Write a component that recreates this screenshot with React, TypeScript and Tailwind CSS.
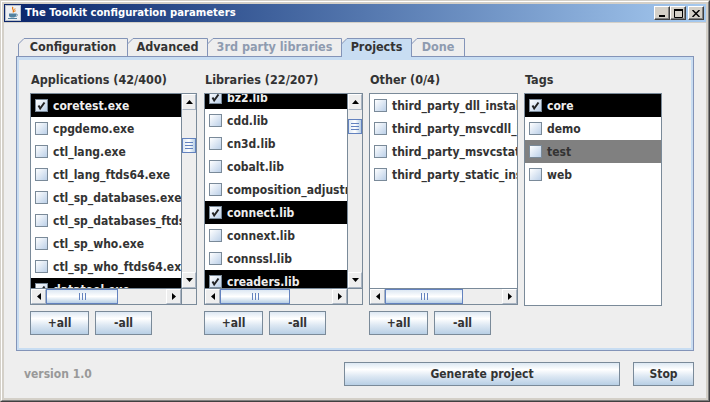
import React from 'react';
import clsx from 'clsx';

type Tone = 'plain' | 'sel' | 'dim';
type Item = { name: string; checked?: boolean; tone?: Tone };

const apps: Item[] = [
  { name: 'coretest.exe', checked: true, tone: 'sel' },
  { name: 'cpgdemo.exe' },
  { name: 'ctl_lang.exe' },
  { name: 'ctl_lang_ftds64.exe' },
  { name: 'ctl_sp_databases.exe' },
  { name: 'ctl_sp_databases_ftds64.exe' },
  { name: 'ctl_sp_who.exe' },
  { name: 'ctl_sp_who_ftds64.exe' },
  { name: 'datatool.exe', checked: true, tone: 'sel' },
];

const libs: Item[] = [
  { name: 'bz2.lib', checked: true, tone: 'sel' },
  { name: 'cdd.lib' },
  { name: 'cn3d.lib' },
  { name: 'cobalt.lib' },
  { name: 'composition_adjustment.lib' },
  { name: 'connect.lib', checked: true, tone: 'sel' },
  { name: 'connext.lib' },
  { name: 'connssl.lib' },
  { name: 'creaders.lib', checked: true, tone: 'sel' },
];

const other: Item[] = [
  { name: 'third_party_dll_install' },
  { name: 'third_party_msvcdll_install' },
  { name: 'third_party_msvcstatic_install' },
  { name: 'third_party_static_install' },
];

const tags: Item[] = [
  { name: 'core', checked: true, tone: 'sel' },
  { name: 'demo' },
  { name: 'test', tone: 'dim' },
  { name: 'web' },
];

type Tab = { label: string; width: number; w: string; state: 'normal' | 'disabled' | 'selected' };

const tabs: Tab[] = [
  { label: 'Configuration', width: 110, w: 'w-[110px]', state: 'normal' },
  { label: 'Advanced', width: 81, w: 'w-[81px]', state: 'normal' },
  { label: '3rd party libraries', width: 135, w: 'w-[135px]', state: 'disabled' },
  { label: 'Projects', width: 71, w: 'w-[71px]', state: 'selected' },
  { label: 'Done', width: 54, w: 'w-[54px]', state: 'disabled' },
];

function CheckBox({ checked }: { checked: boolean }) {
  return (
    <span className="flex h-[13px] w-[13px] shrink-0 items-center justify-center border border-[#7a8a99] bg-linear-to-br from-white to-[#bcd0e8]">
      {checked && (
        <svg width="11" height="11" viewBox="0 0 11 11">
          <path d="M2.5 5.5 L4.2 8.5 L8.5 2.5" fill="none" stroke="#222" strokeWidth="2" />
        </svg>
      )}
    </span>
  );
}

function ItemRow({ item }: { item: Item }) {
  const tone = item.tone ?? 'plain';
  return (
    <div
      className={clsx(
        'flex h-[23px] shrink-0 items-center gap-[5px] whitespace-nowrap pl-[4px] text-[12px]',
        tone === 'sel' && 'bg-black text-[#eeeeee]',
        tone === 'dim' && 'bg-[#808080] text-[#333333]',
        tone === 'plain' && 'bg-white text-[#333333]'
      )}
    >
      <CheckBox checked={!!item.checked} />
      <span>{item.name}</span>
    </div>
  );
}

function Arrow({ dir }: { dir: 'up' | 'down' | 'left' | 'right' }) {
  const pts = {
    up: '0,4 7,4 3.5,0',
    down: '0,0 7,0 3.5,4',
    left: '4,0 4,7 0,3.5',
    right: '0,0 0,7 4,3.5',
  }[dir];
  const vertical = dir === 'up' || dir === 'down';
  return (
    <svg width={vertical ? 7 : 4} height={vertical ? 4 : 7} viewBox={vertical ? '0 0 7 4' : '0 0 4 7'}>
      <polygon points={pts} fill="#000" />
    </svg>
  );
}

function ArrowBtn({ dir, className }: { dir: 'up' | 'down' | 'left' | 'right'; className: string }) {
  return (
    <div
      className={clsx(
        'flex shrink-0 items-center justify-center border border-[#a9b4c2] border-t-white border-l-white bg-[#eeeeee]',
        className
      )}
    >
      <Arrow dir={dir} />
    </div>
  );
}

function VScroll({ thumb }: { thumb: string }) {
  return (
    <div className="flex w-[15px] shrink-0 flex-col border-l border-[#7a8a99] bg-[#eeeeee]">
      <ArrowBtn dir="up" className="h-[16px]" />
      <div className="flex-1">
        <div
          className={clsx(
            'flex h-[15px] flex-col items-center justify-center gap-[2px] border border-[#6382bf] bg-linear-to-r from-[#dde8f3] via-white to-[#b8cfe5]',
            thumb
          )}
        >
          <span className="h-px w-[8px] bg-[#6382bf]" />
          <span className="h-px w-[8px] bg-[#6382bf]" />
          <span className="h-px w-[8px] bg-[#6382bf]" />
        </div>
      </div>
      <ArrowBtn dir="down" className="h-[16px]" />
    </div>
  );
}

function HScroll({ thumb, corner }: { thumb: string; corner: boolean }) {
  return (
    <div className="flex h-[16px] shrink-0 border-t border-[#7a8a99] bg-[#eeeeee]">
      <ArrowBtn dir="left" className="w-[15px]" />
      <div className="flex flex-1">
        <div
          className={clsx(
            'flex items-center justify-center gap-[2px] border border-[#6382bf] bg-linear-to-b from-[#dde8f3] via-white to-[#b8cfe5]',
            thumb
          )}
        >
          <span className="h-[7px] w-px bg-[#6382bf]" />
          <span className="h-[7px] w-px bg-[#6382bf]" />
          <span className="h-[7px] w-px bg-[#6382bf]" />
        </div>
      </div>
      <ArrowBtn dir="right" className="w-[15px]" />
      {corner && <div className="w-[15px] shrink-0 border-l border-[#7a8a99] bg-[#eeeeee]" />}
    </div>
  );
}

function Pane({
  items,
  size,
  shift,
  vThumb,
  hThumb,
}: {
  items: Item[];
  size: string;
  shift?: string;
  vThumb?: string;
  hThumb?: string;
}) {
  return (
    <div className={clsx('flex shrink-0 flex-col border border-[#7a8a99] bg-white', size)}>
      <div className="flex min-h-0 flex-1">
        <div className="min-w-0 flex-1 overflow-hidden">
          <div className={clsx('flex flex-col', shift)}>
            {items.map((it) => (
              <ItemRow key={it.name} item={it} />
            ))}
          </div>
        </div>
        {vThumb && <VScroll thumb={vThumb} />}
      </div>
      {hThumb && <HScroll thumb={hThumb} corner={!!vThumb} />}
    </div>
  );
}

function Btn({ className, children }: { className: string; children: React.ReactNode }) {
  return (
    <div
      className={clsx(
        'flex h-[24px] shrink-0 items-center justify-center border border-[#7a8a99] bg-[linear-gradient(180deg,#dde8f3_0%,#ffffff_30%,#dde8f3_60%,#b8cfe5_100%)] text-[12px] text-[#333333]',
        className
      )}
    >
      {children}
    </div>
  );
}

function Column({
  title,
  children,
  buttons,
}: {
  title: string;
  children: React.ReactNode;
  buttons: boolean;
}) {
  return (
    <div className="flex flex-col">
      <div className="h-[14px] pl-px text-[12.5px] leading-[14px] text-[#333333]">{title}</div>
      <div className="mt-[6px]">{children}</div>
      {buttons && (
        <div className="mt-[6px] flex gap-[6px]">
          <Btn className="w-[59px]">+all</Btn>
          <Btn className="w-[57px]">-all</Btn>
        </div>
      )}
    </div>
  );
}

function TabItem({ tab, first }: { tab: Tab; first: boolean }) {
  const w = tab.width;
  const selected = tab.state === 'selected';
  const h = selected ? 19 : 18;
  return (
    <div className={clsx('relative flex h-[18px] shrink-0 items-center justify-center', tab.w, !first && '-ml-px', selected && 'z-10')}>
      <svg className="absolute inset-0" width={w} height={h} viewBox={`0 0 ${w} ${h}`}>
        <path
          d={`M0.5 ${h} V6 L6 0.5 H${w - 0.5} V${h}`}
          fill={selected ? '#c8ddf2' : '#eeeeee'}
          stroke="#8394b8"
          strokeWidth="1"
        />
      </svg>
      <span
        className={clsx(
          'relative text-[12.5px]',
          tab.state === 'disabled' ? 'text-[#8e9bb0]' : 'text-[#333333]'
        )}
      >
        {tab.label}
      </span>
    </div>
  );
}

function JavaIcon() {
  return (
    <svg width="16" height="16" viewBox="0 0 16 16">
      <rect x="0.5" y="0.5" width="15" height="15" fill="#eef0f4" stroke="#b9c0cc" />
      <path d="M8 2 C6 4 10 5 8 7.5" fill="none" stroke="#e76f00" strokeWidth="1.2" />
      <path d="M10 3.5 C9 5 11 5.5 9.5 7" fill="none" stroke="#e76f00" strokeWidth="0.9" />
      <path d="M4 8.5 H11 V10.5 C11 12 9.5 12.5 7.5 12.5 C5.5 12.5 4 12 4 10.5 Z" fill="#5382a1" />
      <path d="M11 9 C13 9 13 11 10.5 11.5" fill="none" stroke="#5382a1" strokeWidth="0.9" />
      <path d="M3 13.5 H12" stroke="#5382a1" strokeWidth="1" />
    </svg>
  );
}

function WinBtn({ children }: { children: React.ReactNode }) {
  return (
    <div className="flex h-[14px] w-[16px] items-center justify-center border border-t-white border-l-white border-r-[#404040] border-b-[#404040] bg-[#d4d0c8] shadow-[inset_-1px_-1px_#808080]">
      {children}
    </div>
  );
}

export default function App() {
  return (
    <div className="h-[402px] w-[710px] font-['DejaVu_Sans_Condensed','DejaVu_Sans',sans-serif] font-bold font-stretch-condensed">
      <div className="flex h-full flex-col border border-t-[#d4d0c8] border-l-[#d4d0c8] border-r-[#404040] border-b-[#404040]">
        <div className="flex flex-1 flex-col border border-t-white border-l-white border-r-[#808080] border-b-[#808080] bg-[#d4d0c8] p-[2px]">
          {/* title bar */}
          <div className="flex h-[18px] shrink-0 items-center bg-linear-to-r from-[#0a246a] to-[#a6caf0] pl-[1px] pr-[2px]">
            <JavaIcon />
            <span className="ml-[4px] text-[11.2px] leading-[18px] text-white">The Toolkit configuration parameters</span>
            <div className="ml-auto flex items-center">
              <WinBtn>
                <svg width="8" height="8" viewBox="0 0 8 8">
                  <rect x="1" y="6" width="6" height="2" fill="#000" />
                </svg>
              </WinBtn>
              <WinBtn>
                <svg width="9" height="9" viewBox="0 0 9 9">
                  <path d="M0.5 1.5 H8.5 V8.5 H0.5 Z" fill="none" stroke="#000" />
                  <rect x="0" y="0" width="9" height="2" fill="#000" />
                </svg>
              </WinBtn>
              <div className="ml-[2px]">
                <WinBtn>
                  <svg width="8" height="7" viewBox="0 0 8 7">
                    <path d="M0.5 0 L7.5 7 M7.5 0 L0.5 7" stroke="#000" strokeWidth="1.5" />
                  </svg>
                </WinBtn>
              </div>
            </div>
          </div>

          {/* client area */}
          <div className="mt-px flex flex-1 flex-col bg-[#eeeeee] px-[12px] pt-[15px]">
            <div className="flex pl-[2px]">
              {tabs.map((t, i) => (
                <TabItem key={t.label} tab={t} first={i === 0} />
              ))}
            </div>
            <div className="h-[295px] border border-[#8394b8]">
              <div className="flex h-full gap-[6px] border-x-2 border-b-2 border-t-[3px] border-[#c8ddf2] pl-[11px] pt-[13px]">
                <div className="mr-px">
                  <Column title="Applications (42/400)" buttons>
                    <Pane items={apps} size="h-[212px] w-[167px]" vThumb="mt-[28px]" hThumb="w-[72px]" />
                  </Column>
                </div>
                <Column title="Libraries (22/207)" buttons>
                  <Pane items={libs} size="h-[212px] w-[159px]" shift="-mt-[8px]" vThumb="mt-[9px]" hThumb="w-[70px]" />
                </Column>
                <Column title="Other (0/4)" buttons>
                  <Pane items={other} size="h-[212px] w-[149px]" hThumb="w-[78px]" />
                </Column>
                <Column title="Tags" buttons={false}>
                  <Pane items={tags} size="h-[213px] w-[138px]" />
                </Column>
              </div>
            </div>

            <div className="mt-[11px] flex items-center">
              <span className="pl-[8px] text-[12px] text-[#999999]">version 1.0</span>
              <div className="ml-auto flex gap-[13px]">
                <Btn className="w-[276px]">Generate project</Btn>
                <Btn className="w-[61px]">Stop</Btn>
              </div>
            </div>
          </div>
        </div>
      </div>
    </div>
  );
}
